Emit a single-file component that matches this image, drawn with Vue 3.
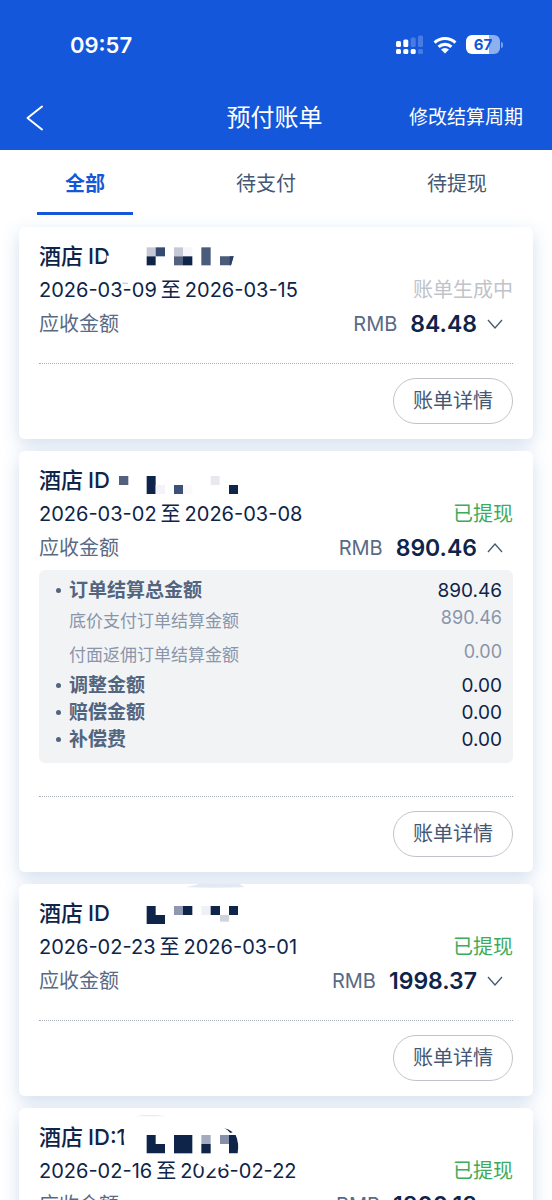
<script setup>
import { ref } from 'vue'

const tabs = ['全部', '待支付', '待提现']
const active = ref(0)

const INK = '#0e2449'

const bills = ref([
  {
    id: '', from: '2026-03-09', to: '2026-03-15', status: '账单生成中', done: false,
    amount: '84.48', open: false, details: [],
    mask: [
      ['M203 50h24v32h-24z', '#fff'], ['M288 122h42v8h-42z', '#fff'], ['M250 131h17v4h-17z', '#c9cedb'],
      ['M323 25h27v27h-27z', '#c5c9d6'], ['M350 25h28v27h-28z', '#354a70'], ['M323 52h27v27h-27z', INK],
      ['M405 25h27v27h-27z', '#c5c9d6'], ['M432 25h28v27h-28z', '#f7f7fb'], ['M405 52h27v27h-27z', '#53617f'],
      ['M432 52h28v27h-28z', INK], ['M487 25h28v54h-28z', '#4a5b7b'], ['M543 52h41l-8 27h-33z', '#4a5b7b'],
      ['M572 52h12l-8 27h-4z', '#2b3f66'],
    ],
  },
  {
    id: '', from: '2026-03-02', to: '2026-03-08', status: '已提现', done: true,
    amount: '890.46', open: true,
    details: [
      { label: '订单结算总金额', value: '890.46' },
      { label: '底价支付订单结算金额', value: '890.46', sub: true },
      { label: '付面返佣订单结算金额', value: '0.00', sub: true },
      { label: '调整金额', value: '0.00' },
      { label: '赔偿金额', value: '0.00' },
      { label: '补偿费', value: '0.00' },
    ],
    mask: [
      ['M240 39h28v27h-28z', '#53617f'], ['M323 39h27v54h-27z', INK], ['M350 66h28v27h-28z', '#f3f3f9'],
      ['M405 66h27v27h-27z', '#3d5077'], ['M432 66h28v27h-28z', '#fafafd'], ['M515 39h27v27h-27z', '#e8e9ee'],
      ['M570 66h27v27h-27z', INK],
    ],
  },
  {
    id: '', from: '2026-02-23', to: '2026-03-01', status: '已提现', done: true,
    amount: '1998.37', open: false, details: [],
    mask: [
      ['M440 -26Q460 -31 484 -37L600 -37L617 -26Q530 -24 440 -26z', '#e1e9f4'],
      ['M323 30h27v27h28v27h-55z', INK], ['M405 30h27v27h-27z', '#8e99b0'], ['M432 30h28v27h-28z', INK],
      ['M487 30h28v27h-28z', '#f0f1f4'], ['M515 30h28v27h-28z', INK], ['M570 30h27v27h-27z', INK],
      ['M543 57h27v20h-27z', '#cfd3dc'],
    ],
  },
  {
    id: ':1', from: '2026-02-16', to: '2026-02-22', status: '已提现', done: true,
    amount: '1800.18', open: false, details: [],
    mask: [
      ['M288 -11Q330 -20 384 -11z', '#e3ebf6'],
      ['M254 40Q249 66 264 82H285V10H264z', '#fff'],
      ['M463 118H575Q560 145 520 146Q480 144 463 118z', '#fff'],
      ['M323 45h27v27h28v28h-55z', INK], ['M405 45h55v55h-55z', INK], ['M487 45h28v27h-28z', '#a3acbf'],
      ['M487 72h28v28h-28z', INK], ['M543 45h27v27h-27z', '#8590a9'],
      ['M570 45h20Q601 70 596 100h-26z', INK], ['M556 25Q568 26 581 37L574 39Q568 30 556 25z', INK],
    ],
  },
])
</script>

<template>
  <div class="page">
    <header class="top">
      <div class="status-bar">
        <span class="time">09:57</span>
        <div class="status-icons">
          <svg class="signal" viewBox="0 0 27 20" aria-hidden="true">
            <g fill="#fff">
              <rect x="0" y="6" width="5" height="6" rx="1.5" />
              <rect x="7.3" y="4.6" width="5" height="7.4" rx="1.5" />
              <rect x="0" y="14" width="5" height="5" rx="1.5" />
              <rect x="7.3" y="14" width="5" height="5" rx="1.5" />
              <rect x="14.7" y="14" width="5" height="5" rx="1.5" />
            </g>
            <g fill="#fff" opacity=".22">
              <rect x="14.7" y="2.6" width="5" height="9.4" rx="1.5" />
              <rect x="22" y="0.4" width="5" height="11.6" rx="1.5" />
              <rect x="22" y="14" width="5" height="5" rx="1.5" />
            </g>
          </svg>
          <svg class="wifi" viewBox="0 0 24 18" aria-hidden="true">
            <g fill="none" stroke="#fff" stroke-width="3.2">
              <path d="M1.6 6.7a15 15 0 0 1 20.8 0" />
              <path d="M5.6 10.9a9.3 9.3 0 0 1 12.8 0" />
            </g>
            <path d="M12 17.6l-4-4.1a5.8 5.8 0 0 1 8 0z" fill="#fff" />
          </svg>
          <div class="battery"><span>67</span></div>
        </div>
      </div>
      <nav class="nav">
        <button class="back" aria-label="返回">
          <svg viewBox="0 0 18 26"><path d="M16 1.5L1.5 13L16 24.5" fill="none" stroke="#fff" stroke-width="2" stroke-linecap="round" stroke-linejoin="round" /></svg>
        </button>
        <h1>预付账单</h1>
        <a class="cycle" href="#">修改结算周期</a>
      </nav>
    </header>

    <div class="tabs" role="tablist">
      <button
        v-for="(t, i) in tabs" :key="t" role="tab" class="tab"
        :class="{ active: i === active }" :aria-selected="i === active" @click="active = i"
      >{{ t }}</button>
    </div>

    <main class="list">
      <section v-for="bill in bills" :key="bill.from" class="card">
        <div class="row title"><span>酒店</span><span>ID{{ bill.id }}</span></div>
        <div class="row">
          <div class="dates"><span>{{ bill.from }}</span><span>至</span><span>{{ bill.to }}</span></div>
          <span class="state" :class="{ done: bill.done }">{{ bill.status }}</span>
        </div>
        <div class="row">
          <span class="muted">应收金额</span>
          <button class="amount" :aria-expanded="bill.open" @click="bill.open = !bill.open">
            <span class="muted">RMB</span>
            <strong>{{ bill.amount }}</strong>
            <svg class="chevron" :class="{ up: bill.open }" viewBox="0 0 16 10"><path d="M1 1L8 9L15 1" fill="none" stroke="#455873" stroke-width="1.3" /></svg>
          </button>
        </div>
        <ul v-if="bill.open && bill.details.length" class="details">
          <li v-for="d in bill.details" :key="d.label" :class="{ sub: d.sub }">
            <span class="label">{{ d.label }}</span>
            <span class="value">{{ d.value }}</span>
          </li>
        </ul>
        <div class="foot" :class="{ spaced: bill.open }">
          <button class="detail-btn">账单详情</button>
        </div>
        <svg class="mask" viewBox="0 0 720 204" aria-hidden="true">
          <path v-for="(m, i) in bill.mask" :key="i" :d="m[0]" :fill="m[1]" />
        </svg>
      </section>
    </main>
  </div>
</template>

<style>
html, body { margin: 0; background: #fff; }
body { height: 100vh; overflow: hidden; }
</style>

<style scoped>
.page {
  height: 100vh;
  overflow: hidden;
  font-family: Inter, "Noto Sans CJK SC", sans-serif;
  font-size: 20px;
  line-height: 28px;
  color: #0e2449;
  background: #fff;
}
button {
  font: inherit;
  color: inherit;
  background: none;
  border: 0;
  padding: 0;
  cursor: pointer;
}
.top { background: #1457da; color: #fff; }
.status-bar {
  display: flex;
  align-items: center;
  justify-content: space-between;
  height: 86px;
  padding: 0 52px 0 70px;
  box-sizing: border-box;
}
.time { font-size: 22px; font-weight: 600; padding-top: 4px; }
.status-icons { display: flex; align-items: center; padding-top: 3px; }
.signal { width: 27px; height: 20px; margin-right: 10px; }
.wifi { width: 24px; height: 18px; margin-right: 9px; }
.battery {
  position: relative;
  width: 34px;
  height: 19px;
  border-radius: 6px;
  background: linear-gradient(90deg, #fff 67%, #8fb0ef 67%);
  color: #1457da;
  font-size: 15px;
  font-weight: 700;
  line-height: 19px;
  text-align: center;
}
.battery::after {
  content: "";
  position: absolute;
  right: -3px;
  top: 7px;
  width: 2px;
  height: 6px;
  border-radius: 0 2px 2px 0;
  background: #7ba0ea;
}
.nav {
  display: grid;
  grid-template-columns: 1fr auto 1fr;
  align-items: center;
  height: 64px;
  padding: 0 29px 0 26px;
}
.back { justify-self: start; display: flex; }
.back svg { width: 18px; height: 26px; }
.nav h1 { margin: 0; font-size: 24px; font-weight: 400; line-height: 32px; }
.cycle { justify-self: end; font-size: 19px; color: #fff; text-decoration: none; }

.tabs { display: flex; justify-content: space-between; padding: 0 37px; }
.tab {
  height: 65px;
  padding: 6px 28px 0;
  line-height: 56px;
  color: #455873;
  border-bottom: 3px solid transparent;
}
.tab.active { color: #1457da; font-weight: 700; border-color: #1457da; }

.list { display: flex; flex-direction: column; gap: 12px; padding: 12px 19px; }
.card {
  position: relative;
  padding: 12px 20px 15px;
  border-radius: 6px;
  background: #fff;
  box-shadow: 0 6px 18px rgba(70, 120, 185, .24);
}
.row { display: flex; align-items: center; justify-content: space-between; height: 34px; }
.title { justify-content: flex-start; gap: 5px; font-size: 22px; font-weight: 500; }
.dates { display: flex; gap: 4px; }
.state { color: #bfc3ca; }
.state.done { color: #3cac5c; }
.muted { color: #596a85; }
.amount { display: flex; align-items: center; padding-right: 10px; }
.amount strong { margin: 0 10px 0 13px; font-size: 23px; font-weight: 600; color: #0e2449; }
.chevron { width: 16px; height: 10px; }
.chevron.up { transform: rotate(180deg); }

.details {
  list-style: none;
  margin: 5px 0 0;
  padding: 7px 11px 10px 30px;
  border-radius: 6px;
  background: #f2f3f5;
}
.details li { position: relative; display: flex; justify-content: space-between; line-height: 27px; }
.details .label { font-size: 19px; font-weight: 700; color: #52657f; }
.details .value { font-size: 19px; }
.details li:not(.sub)::before {
  content: "";
  position: absolute;
  left: -13px;
  top: 11px;
  width: 5px;
  height: 5px;
  border-radius: 50%;
  background: #52657f;
}
.details .sub .label { font-size: 17px; font-weight: 400; line-height: 34px; color: #8a95a9; }
.details .sub .value { font-size: 18px; color: #8a95a9; }

.foot {
  display: flex;
  justify-content: flex-end;
  margin-top: 22px;
  padding-top: 14px;
  border-top: 1px dotted #a9adb5;
}
.foot.spaced { margin-top: 33px; }
.detail-btn {
  height: 46px;
  padding: 0 19px;
  border: 1px solid #c0c4ca;
  border-radius: 23px;
  color: #455873;
}
.mask {
  position: absolute;
  left: 20px;
  top: 12px;
  width: 240px;
  height: 68px;
  overflow: visible;
  pointer-events: none;
}
</style>
